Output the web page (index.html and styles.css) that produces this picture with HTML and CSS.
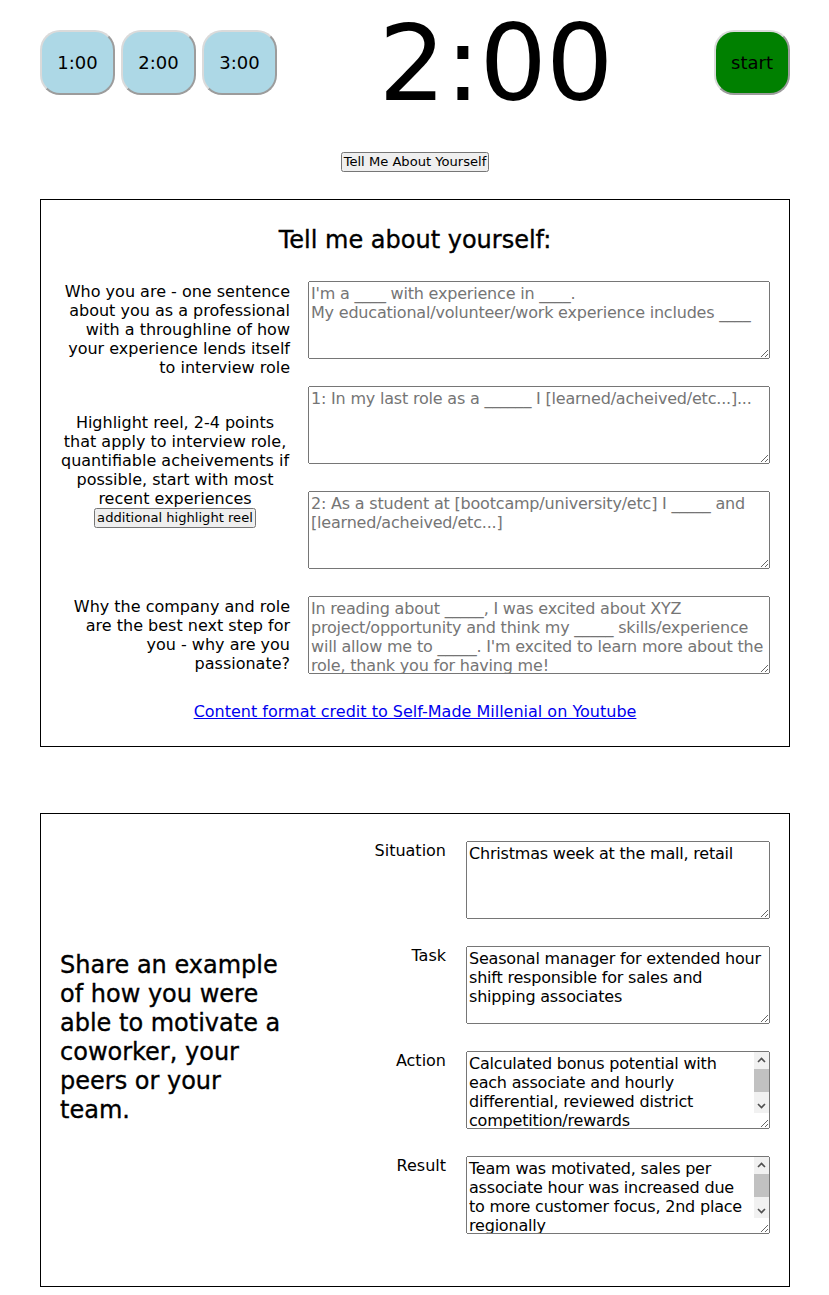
FILE: index.html
```html
<!DOCTYPE html>
<html lang="en">
<head>
<meta charset="utf-8">
<title>Interview Practice Timer</title>
<link rel="stylesheet" href="styles.css">
</head>
<body>
<div class="page">
  <header class="top">
    <div class="presets">
      <button class="pill preset">1:00</button>
      <button class="pill preset">2:00</button>
      <button class="pill preset">3:00</button>
    </div>
    <div class="timer">2:00</div>
    <button class="pill start">start</button>
  </header>

  <div class="switch">
    <button class="small-btn">Tell Me About Yourself</button>
  </div>

  <section class="card tmay">
    <h2 class="card-title">Tell me about yourself:</h2>

    <div class="row row-first">
      <div class="label label-right">Who you are - one sentence about you as a professional with a throughline of how your experience lends itself to interview role</div>
      <div class="fields">
        <textarea class="field" placeholder="I'm a ____ with experience in ____.&#10;My educational/volunteer/work experience includes ____"></textarea>
      </div>
    </div>

    <div class="row row-highlight">
      <div class="label label-center">Highlight reel, 2-4 points that apply to interview role, quantifiable acheivements if possible, start with most recent experiences <button class="small-btn">additional highlight reel</button></div>
      <div class="fields">
        <textarea class="field" placeholder="1: In my last role as a ______ I [learned/acheived/etc...]..."></textarea>
        <textarea class="field" placeholder="2: As a student at [bootcamp/university/etc] I _____ and [learned/acheived/etc...]"></textarea>
      </div>
    </div>

    <div class="row row-why">
      <div class="label label-right">Why the company and role are the best next step for you - why are you passionate?</div>
      <div class="fields">
        <textarea class="field" placeholder="In reading about _____, I was excited about XYZ project/opportunity and think my _____ skills/experience will allow me to _____. I'm excited to learn more about the role, thank you for having me!"></textarea>
      </div>
    </div>

    <p class="credit"><a href="#">Content format credit to Self-Made Millenial on Youtube</a></p>
  </section>

  <section class="card star">
    <h3 class="share">Share an example of how you were able to motivate a coworker, your peers or your team.</h3>
    <div class="star-fields">
      <div class="star-row">
        <div class="star-label">Situation</div>
        <div class="field-wrap">
          <textarea class="field star-field">Christmas week at the mall, retail</textarea>
        </div>
      </div>
      <div class="star-row">
        <div class="star-label">Task</div>
        <div class="field-wrap">
          <textarea class="field star-field">Seasonal manager for extended hour shift responsible for sales and shipping associates</textarea>
        </div>
      </div>
      <div class="star-row">
        <div class="star-label">Action</div>
        <div class="field-wrap">
          <textarea class="field star-field has-scroll">Calculated bonus potential with each associate and hourly differential, reviewed district competition/rewards</textarea>
          <div class="fake-scroll" aria-hidden="true">
            <span class="sb-btn"><svg width="9" height="6" viewBox="0 0 9 6"><path d="M1 5 L4.5 1.5 L8 5" fill="none" stroke="#505050" stroke-width="1.6"/></svg></span>
            <span class="sb-thumb"></span>
            <span class="sb-btn"><svg width="9" height="6" viewBox="0 0 9 6"><path d="M1 1 L4.5 4.5 L8 1" fill="none" stroke="#505050" stroke-width="1.6"/></svg></span>
          </div>
        </div>
      </div>
      <div class="star-row">
        <div class="star-label">Result</div>
        <div class="field-wrap">
          <textarea class="field star-field has-scroll">Team was motivated, sales per associate hour was increased due to more customer focus, 2nd place regionally</textarea>
          <div class="fake-scroll" aria-hidden="true">
            <span class="sb-btn"><svg width="9" height="6" viewBox="0 0 9 6"><path d="M1 5 L4.5 1.5 L8 5" fill="none" stroke="#505050" stroke-width="1.6"/></svg></span>
            <span class="sb-thumb"></span>
            <span class="sb-btn"><svg width="9" height="6" viewBox="0 0 9 6"><path d="M1 1 L4.5 4.5 L8 1" fill="none" stroke="#505050" stroke-width="1.6"/></svg></span>
          </div>
        </div>
      </div>
    </div>
  </section>
</div>
</body>
</html>
```

FILE: styles.css
```css
html, body {
  margin: 0;
  padding: 0;
  background: #ffffff;
}

body {
  font-family: "DejaVu Sans", "Liberation Sans", sans-serif;
  font-size: 16px;
  line-height: 19px;
  color: #000000;
}

.page {
  width: 750px;
  margin-left: 40px;
  padding-bottom: 8px;
}

/* ---------- top bar ---------- */
.top {
  height: 125px;
  display: flex;
  align-items: center;
  justify-content: space-between;
}

.presets {
  display: flex;
  gap: 6px;
}

.pill {
  box-sizing: border-box;
  width: 75px;
  height: 65px;
  padding: 0;
  border-width: 2px;
  border-style: solid;
  border-color: #dadada #9c9c9c #9c9c9c #dadada;
  border-radius: 20px;
  font-family: "DejaVu Sans", sans-serif;
  font-size: 18px;
  color: #000000;
  cursor: pointer;
}

.preset {
  background: #add8e6;
}

.start {
  width: 76px;
  background: #008000;
}

.timer {
  font-family: "DejaVu Sans", sans-serif;
  font-size: 106px;
  line-height: 106px;
  margin-top: 2px;
  letter-spacing: -1px;
}

/* ---------- small native buttons ---------- */
.switch {
  margin-top: 27px;
  text-align: center;
  line-height: 20px;
}

.small-btn {
  font-family: "DejaVu Sans", sans-serif;
  font-size: 13.1px;
  line-height: 14px;
  padding: 1px 1px;
  margin: 0;
  vertical-align: top;
}

/* ---------- cards ---------- */
.card {
  border: 1px solid #000000;
  padding: 26px 19px 25px 19px;
}

.tmay {
  margin-top: 27px;
}

.card-title {
  margin: 0 0 26px 0;
  font-size: 24px;
  line-height: 29px;
  font-weight: normal;
  -webkit-text-stroke: 0.35px #000;
  text-align: center;
}

.row {
  display: flex;
  align-items: flex-start;
  gap: 18px;
}

.row-first {
  margin-bottom: 9px;
}

.row-highlight {
  margin-bottom: 27px;
}

.label {
  width: 230px;
  flex: none;
}

.label-right {
  text-align: right;
  margin-top: 1px;
}

.label-center {
  text-align: center;
  margin-top: 27px;
}

.fields {
  display: flex;
  flex-direction: column;
  gap: 27px;
}

.field {
  display: block;
  box-sizing: border-box;
  width: 462px;
  height: 78px;
  margin: 0;
  padding: 2px;
  font-family: "DejaVu Sans", sans-serif;
  font-size: 16px;
  line-height: 19px;
  letter-spacing: -0.2px;
  color: #000000;
}

.credit {
  margin: 28px 0 0 0;
  text-align: center;
}

.credit a {
  color: #0000ee;
  text-decoration: underline;
}

/* ---------- STAR card ---------- */
.star {
  margin-top: 66px;
  padding-top: 27px;
  padding-bottom: 52px;
  display: flex;
  align-items: center;
}

.share {
  width: 230px;
  flex: none;
  margin: 0;
  font-size: 24px;
  line-height: 29px;
  font-weight: normal;
  -webkit-text-stroke: 0.35px #000;
}

.star-fields {
  flex: 1;
  display: flex;
  flex-direction: column;
  gap: 27px;
}

.star-row {
  display: flex;
  align-items: flex-start;
}

.star-label {
  flex: 1;
  text-align: right;
  margin-right: 20px;
}

.field-wrap {
  position: relative;
  flex: none;
}

.star-field {
  width: 304px;
}

.has-scroll {
  padding-right: 17px;
}

/* drawn scrollbar overlay for the overflowing answers */
.fake-scroll {
  position: absolute;
  top: 1px;
  right: 1px;
  width: 15px;
  height: 61px;
  background: #f1f1f1;
  display: flex;
  flex-direction: column;
  pointer-events: none;
}

.sb-btn {
  height: 15px;
  flex: none;
  display: flex;
  align-items: center;
  justify-content: center;
}

.sb-thumb {
  flex: 1;
  margin: 2px 0 6px 0;
  background: #c1c1c1;
}
```
